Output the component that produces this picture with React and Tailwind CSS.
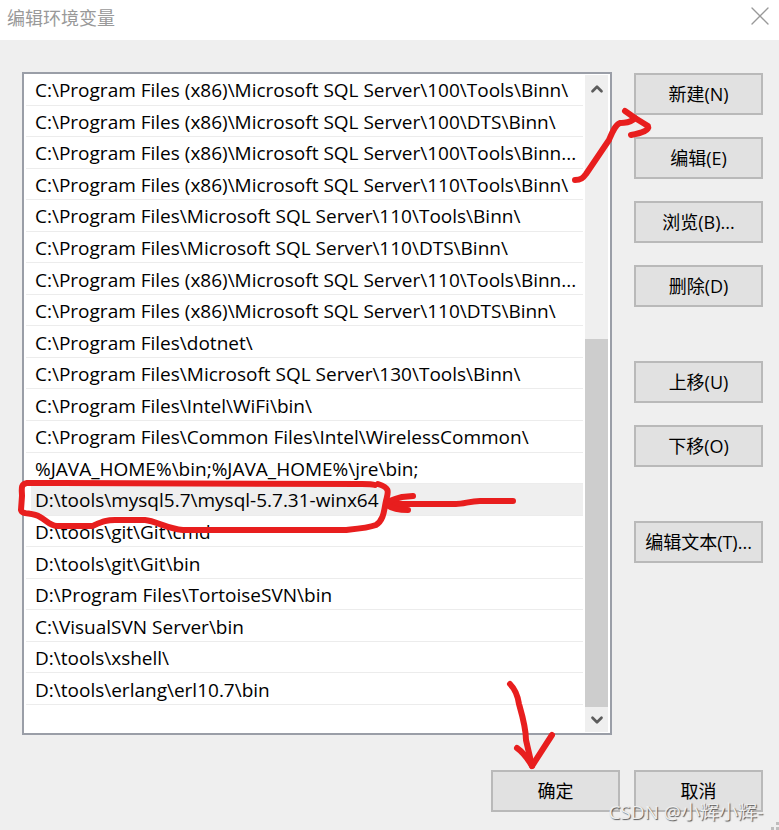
import { X, ChevronUp, ChevronDown } from "lucide-react";

const paths = [
    "C:\\Program Files (x86)\\Microsoft SQL Server\\100\\Tools\\Binn\\",
    "C:\\Program Files (x86)\\Microsoft SQL Server\\100\\DTS\\Binn\\",
    "C:\\Program Files (x86)\\Microsoft SQL Server\\100\\Tools\\Binn...",
    "C:\\Program Files (x86)\\Microsoft SQL Server\\110\\Tools\\Binn\\",
    "C:\\Program Files\\Microsoft SQL Server\\110\\Tools\\Binn\\",
    "C:\\Program Files\\Microsoft SQL Server\\110\\DTS\\Binn\\",
    "C:\\Program Files (x86)\\Microsoft SQL Server\\110\\Tools\\Binn...",
    "C:\\Program Files (x86)\\Microsoft SQL Server\\110\\DTS\\Binn\\",
    "C:\\Program Files\\dotnet\\",
    "C:\\Program Files\\Microsoft SQL Server\\130\\Tools\\Binn\\",
    "C:\\Program Files\\Intel\\WiFi\\bin\\",
    "C:\\Program Files\\Common Files\\Intel\\WirelessCommon\\",
    "%JAVA_HOME%\\bin;%JAVA_HOME%\\jre\\bin;",
    "D:\\tools\\mysql5.7\\mysql-5.7.31-winx64",
    "D:\\tools\\git\\Git\\cmd",
    "D:\\tools\\git\\Git\\bin",
    "D:\\Program Files\\TortoiseSVN\\bin",
    "C:\\VisualSVN Server\\bin",
    "D:\\tools\\xshell\\",
    "D:\\tools\\erlang\\erl10.7\\bin",
];

const selectedIndex = 13;

const actionGroups = [
    ["新建(N)", "编辑(E)", "浏览(B)...", "删除(D)"],
    ["上移(U)", "下移(O)"],
    ["编辑文本(T)..."],
];

function DialogButton({ children }) {
    return (
        <button
            type="button"
            className="w-[129px] h-[42px] shrink-0 border-2 border-[#b9b9b9] bg-[#e1e1e1] text-lg leading-6 whitespace-nowrap"
        >
            {children}
        </button>
    );
}

function TitleBar() {
    return (
        <header className="flex items-center justify-between h-10 bg-white pl-[7px] pr-[3px]">
            <h1 className="text-lg leading-6 pb-1 text-[#999999]">编辑环境变量</h1>
            <button type="button" aria-label="关闭" className="text-[#999999] pb-2">
                <X className="w-8 h-8" strokeWidth={1} />
            </button>
        </header>
    );
}

function ScrollBar() {
    return (
        <div className="flex flex-col w-[23px] my-px mr-0.5 ml-0.5 bg-[#efefef] text-[#5c5c5c]">
            <button type="button" aria-label="向上滚动" className="flex items-center justify-center h-7">
                <ChevronUp className="w-[18px] h-[18px]" strokeWidth={3.6} />
            </button>
            <div className="flex-[236] min-h-0" />
            <div className="flex-[368] min-h-0 bg-[#cdcdcd]" />
            <button type="button" aria-label="向下滚动" className="flex items-center justify-center h-[25px]">
                <ChevronDown className="w-[18px] h-[18px]" strokeWidth={3.6} />
            </button>
        </div>
    );
}

function PathList() {
    return (
        <div className="flex flex-1 min-w-0 border-2 border-[#9a9ea7] bg-white">
            <div className="flex-1 min-w-0 pl-0.5 pb-7">
                <ul role="listbox" aria-label="环境变量" className="grid auto-rows-fr min-h-[631px]">
                    {paths.map((path, index) => (
                        <li
                            key={index}
                            role="option"
                            aria-selected={index === selectedIndex}
                            className="flex items-stretch border-b border-[#ececec] pl-[5px]"
                        >
                            <span
                                className={`flex flex-1 items-center min-w-0 pl-1 pt-0.5 text-[19px] leading-6 whitespace-nowrap ${
                                    index === selectedIndex ? "bg-[#efefef]" : ""
                                }`}
                            >
                                {path}
                            </span>
                        </li>
                    ))}
                </ul>
            </div>
            <ScrollBar />
        </div>
    );
}

// Red pen marks drawn over the dialog
function PenMarks() {
    return (
        <svg
            viewBox="0 0 779 830"
            className="absolute top-0 left-0 w-[779px] h-[830px] pointer-events-none"
            fill="none"
            stroke="#e81e1e"
            strokeWidth="6"
            strokeLinecap="round"
            strokeLinejoin="round"
            aria-hidden="true"
        >
            <path d="M575 180C581 180 583 178 586 174L609 140C612 133 615 125 620 123C625 122 630 124 635 118" />
            <path d="M625 111L635 118L648 126C650 130 642 133 631 135" />
            <path d="M375 485C372 484 368 484 362 484L62 483L27 483C20 484 22 490 22 496L21 510C22 515 32 512 40 517C46 520 50 526 57 526L92 526C102 522 106 520 115 520L145 520C156 521 168 529 183 530L345 530C355 529 368 528 376 525C384 520 384 510 386 501C388 492 391 488 378 484" />
            <path d="M513 501L480 501C470 501 464 504 456 504L388 504" />
            <path d="M413 496L402 497C394 499 388 501 386 504C390 508 396 510 408 510" />
            <path d="M510 684C516 690 518 697 519 704C523 718 526 728 526 740L532 766" />
            <path d="M517 748C524 753 528 759 532 766L552 735" />
        </svg>
    );
}

function ResizeGrip() {
    return (
        <svg viewBox="0 0 9 9" className="absolute right-0 bottom-0 w-[9px] h-[9px]" fill="#bdbdbd" aria-hidden="true">
            <rect x="1" y="6" width="3" height="3" />
            <rect x="6" y="6" width="3" height="3" />
            <rect x="6" y="1" width="3" height="3" />
        </svg>
    );
}

export default function App() {
    return (
        <div className="relative flex flex-col min-h-screen overflow-hidden bg-[#efefef] text-black font-['Open_Sans','Noto_Sans_CJK_SC',sans-serif]">
            <TitleBar />
            <main className="flex gap-[22px] pt-8 pl-[22px] pr-4">
                <PathList />
                <div className="flex flex-col gap-[54px] pt-px">
                    {actionGroups.map((group, index) => (
                        <div key={index} className="flex flex-col gap-[22px]">
                            {group.map((label) => (
                                <DialogButton key={label}>{label}</DialogButton>
                            ))}
                        </div>
                    ))}
                </div>
            </main>
            <footer className="flex justify-end gap-[14px] pt-[35px] pr-4 pb-[18px]">
                <DialogButton>确定</DialogButton>
                <DialogButton>取消</DialogButton>
            </footer>
            <PenMarks />
            <p className="absolute right-4 bottom-1 text-[19px] leading-7 whitespace-nowrap text-[#eeeeee] [text-shadow:1px_1px_1px_#555555]">
                CSDN @小辉小辉-
            </p>
            <ResizeGrip />
        </div>
    );
}
